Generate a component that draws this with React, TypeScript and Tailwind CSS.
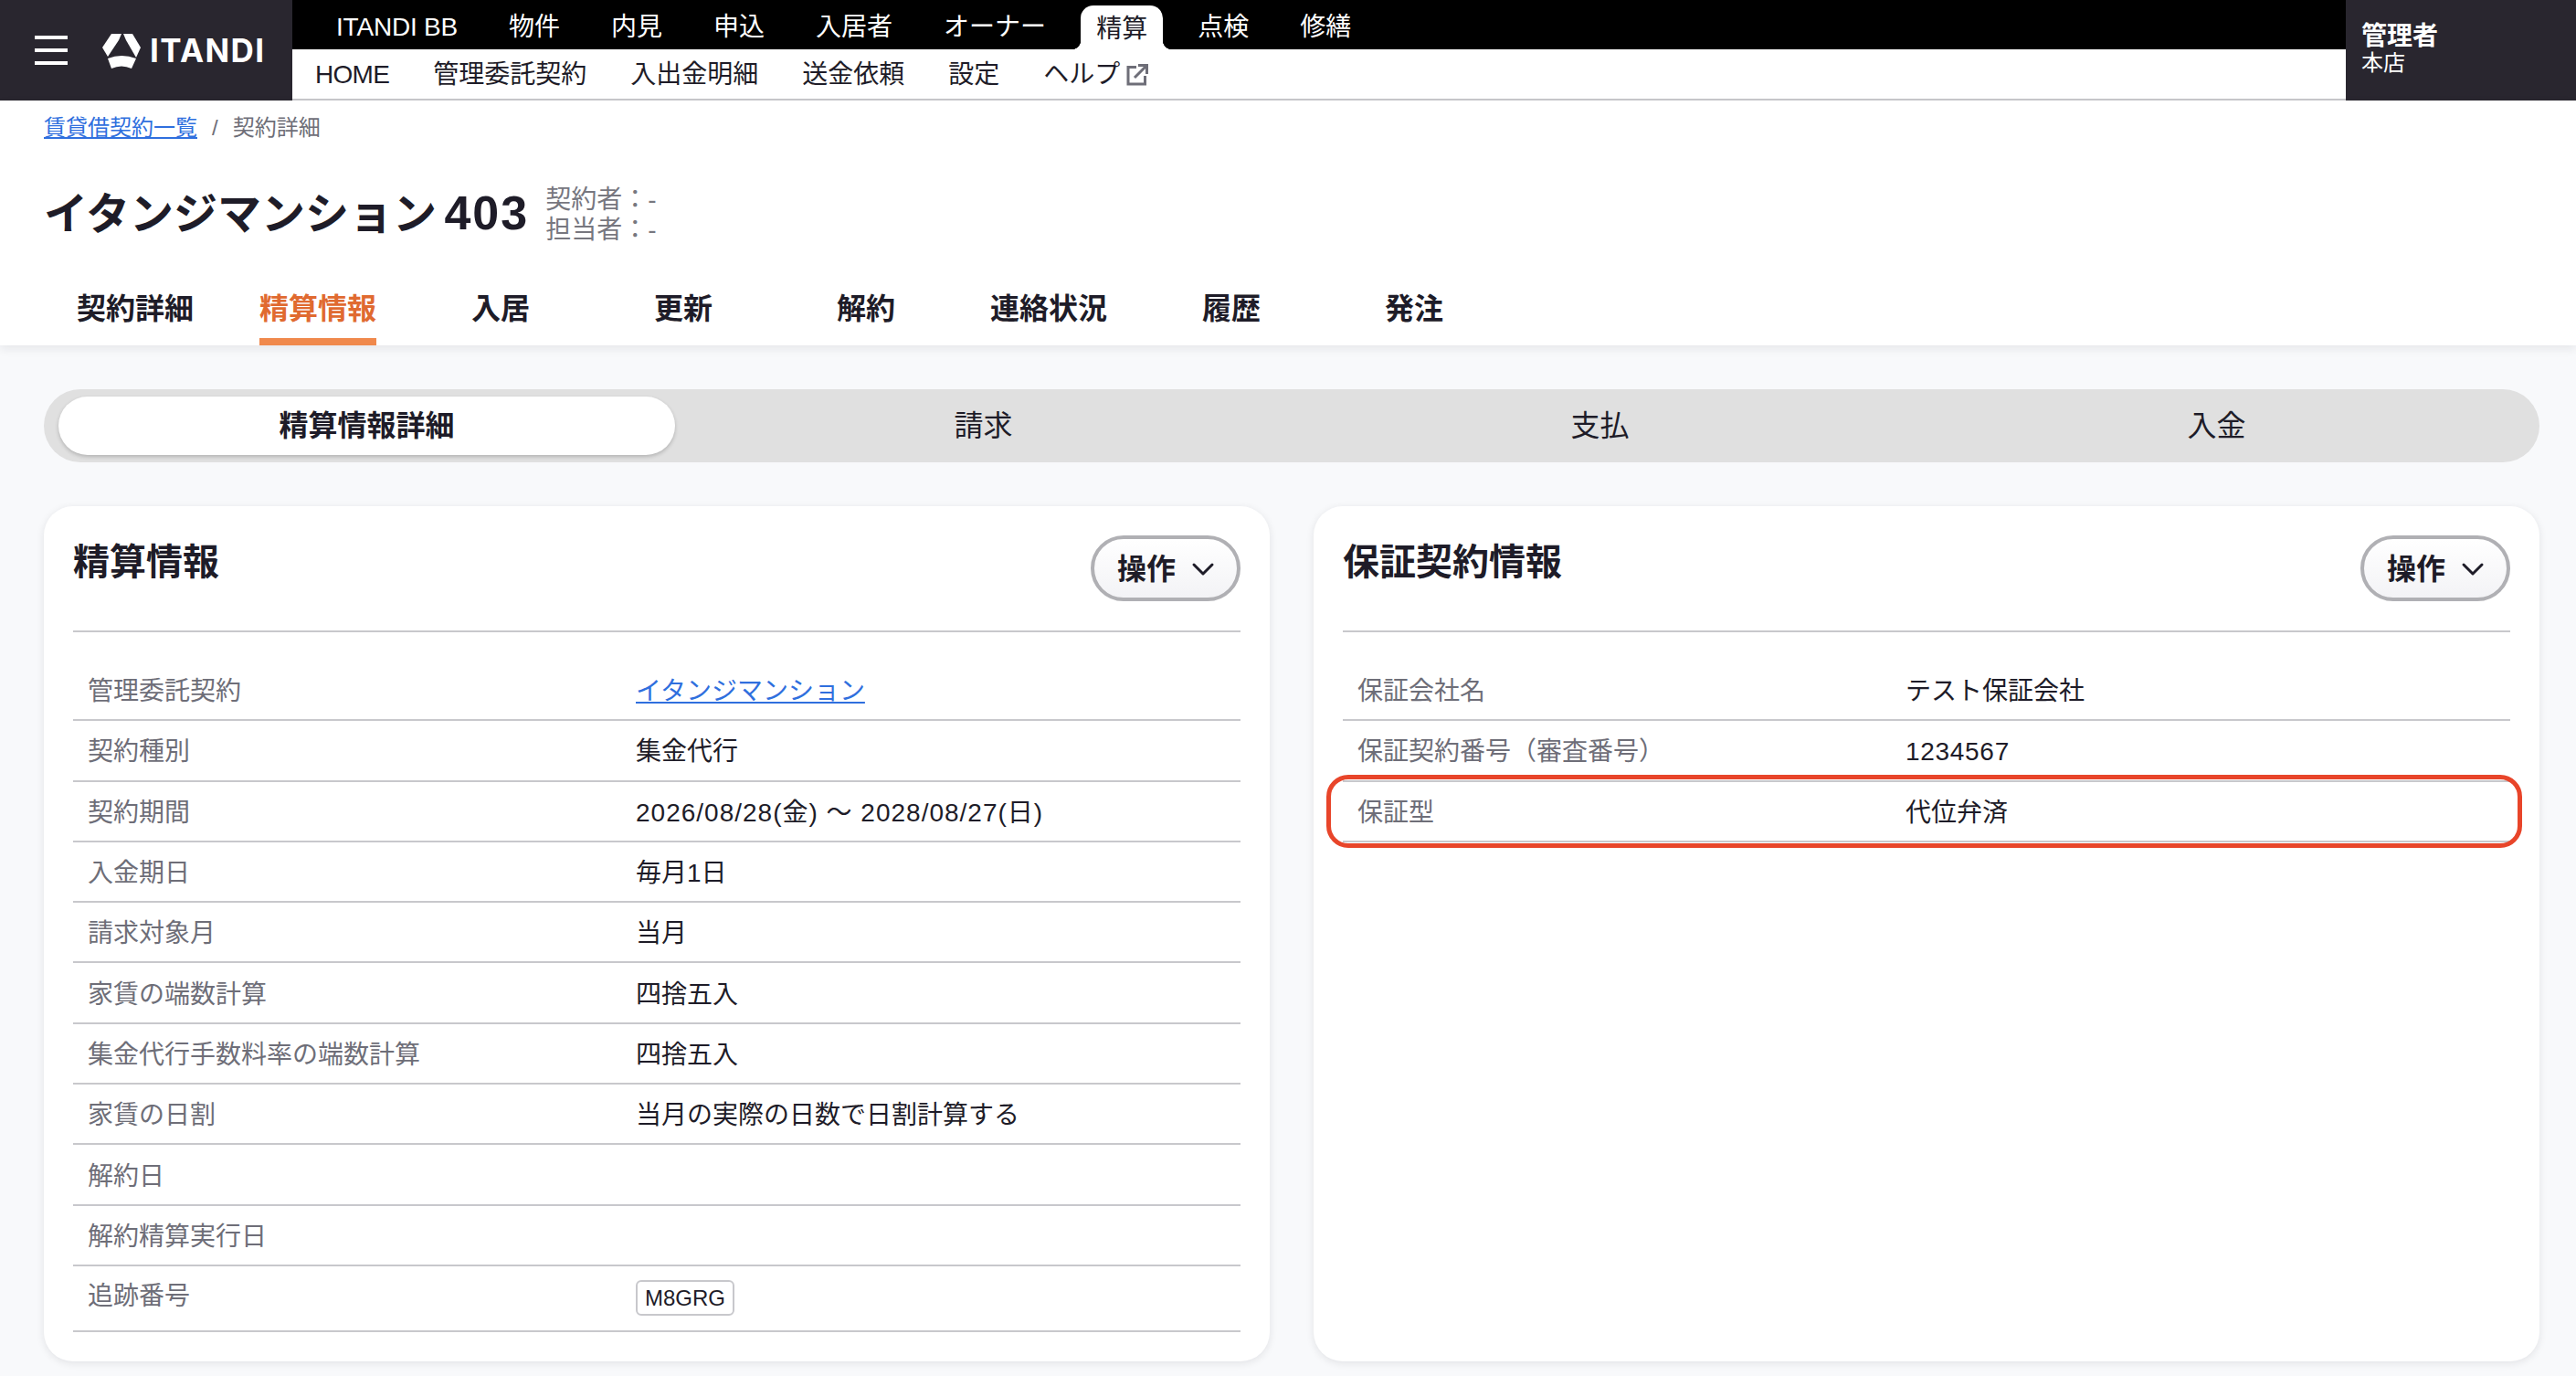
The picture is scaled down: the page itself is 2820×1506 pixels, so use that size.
import React from 'react';
import { ChevronDown } from 'lucide-react';

const topNav = ['ITANDI BB', '物件', '内見', '申込', '入居者', 'オーナー', '精算', '点検', '修繕'];
const subNav = ['HOME', '管理委託契約', '入出金明細', '送金依頼', '設定'];
const pageTabs = ['契約詳細', '精算情報', '入居', '更新', '解約', '連絡状況', '履歴', '発注'];
const segments = ['精算情報詳細', '請求', '支払', '入金'];

const settlementRows = [
  { label: '契約種別', value: '集金代行' },
  { label: '契約期間', value: <span className="tracking-[1px]">2026/08/28(金) 〜 2028/08/27(日)</span> },
  { label: '入金期日', value: '毎月1日' },
  { label: '請求対象月', value: '当月' },
  { label: '家賃の端数計算', value: '四捨五入' },
  { label: '集金代行手数料率の端数計算', value: '四捨五入' },
  { label: '家賃の日割', value: '当月の実際の日数で日割計算する' },
  { label: '解約日', value: '' },
  { label: '解約精算実行日', value: '' },
];

const guaranteeRows = [
  { label: '保証会社名', value: 'テスト保証会社' },
  { label: '保証契約番号（審査番号）', value: <span className="tracking-[0.7px]">1234567</span> },
  { label: '保証型', value: '代位弁済' },
];

function Logo() {
  return (
    <div className="flex items-center gap-[10px]">
      <svg width="42" height="39" viewBox="0 0 42 39" fill="#fff">
        <path d="M10 1H21L18 8L6 26L0 16Z" />
        <path d="M23 1H33L42 16L37 27L26 8Z" />
        <path d="M6 28Q21 22 37 28L32 39Q21 34 10 39Z" />
      </svg>
      <span className="text-[35px] leading-none font-bold tracking-[1.4px] text-white font-['Inter',sans-serif]">ITANDI</span>
    </div>
  );
}

function Header() {
  return (
    <header className="flex h-[110px] bg-white">
      <div className="flex w-[320px] items-center bg-[#29262f] pl-[38px]">
        <div className="mr-[38px] flex w-[36px] flex-col gap-[10px]">
          <span className="h-[4px] bg-white" />
          <span className="h-[4px] bg-white" />
          <span className="h-[4px] bg-white" />
        </div>
        <Logo />
      </div>
      <div className="flex-1 border-b-2 border-[#c8c8cc]">
        <nav className="flex h-[54px] items-end gap-[20px] bg-black pl-[30px]">
          {topNav.map((item) =>
            item === '精算' ? (
              <a key={item} className="relative flex h-[48px] items-center rounded-t-[14px] bg-white px-[17px] pt-[3px] text-[28px] text-[#1e1c28]">
                {item}
                <span className="absolute bottom-0 left-[-10px] h-[10px] w-[10px] bg-[radial-gradient(circle_at_0_0,#000_10px,#fff_10.5px)]" />
                <span className="absolute right-[-10px] bottom-0 h-[10px] w-[10px] bg-[radial-gradient(circle_at_100%_0,#000_10px,#fff_10.5px)]" />
              </a>
            ) : item === 'ITANDI BB' ? (
              <a key={item} className="flex h-[54px] items-center px-[18px] pt-[5px] text-[28px] tracking-[-0.2px] text-white">
                {item}
              </a>
            ) : (
              <a key={item} className="flex h-[54px] items-center px-[18px] pt-[6px] text-[28px] text-white">
                {item}
              </a>
            ),
          )}
        </nav>
        <nav className="flex h-[54px] items-center gap-[48px] pt-[2px] pl-[25px] text-[28px] text-[#1e1c28]">
          {subNav.map((item) =>
            item === 'HOME' ? (
              <a key={item} className="tracking-[-0.7px]">{item}</a>
            ) : (
              <a key={item}>{item}</a>
            ),
          )}
          <a className="flex items-center gap-[7px]">
            ヘルプ
            <svg width="24" height="24" viewBox="0 0 24 24" fill="none" stroke="#6e6e78" strokeWidth="3">
              <path d="M11 3.5H2V22H20.5V13" />
              <path d="M9 15L22 2" />
              <path d="M13 1.5H22.5V11" />
            </svg>
          </a>
        </nav>
      </div>
      <div className="flex w-[252px] flex-col bg-[#29262f] pt-[23px] pl-[17px] text-white">
        <span className="text-[28px] leading-[33px] font-bold">管理者</span>
        <span className="text-[24px] leading-[26px]">本店</span>
      </div>
    </header>
  );
}

function PageHead() {
  return (
    <section className="relative bg-white px-[48px] shadow-[0_4px_10px_rgba(30,28,40,0.08)]">
      <div className="flex h-[56px] items-center pt-[3px] text-[24px] text-[#6e6e78]">
        <a className="text-[#2f6fde] underline underline-offset-2">賃貸借契約一覧</a>
        <span className="mx-[16px]">/</span>
        <span>契約詳細</span>
      </div>
      <div className="flex h-[132px] items-center pt-[4px]">
        <h1 className="text-[48px] leading-[60px] font-bold text-[#1e1c28]">
          イタンジマンション <span className="ml-[-5px] text-[52px] tracking-[2px]">403</span>
        </h1>
        <div className="mt-[2px] ml-[18px] text-[28px] leading-[33px] text-[#77777f]">
          <div>契約者：-</div>
          <div>担当者：-</div>
        </div>
      </div>
      <nav className="flex h-[80px]">
        {pageTabs.map((tab) => (
          <div key={tab} className="flex w-[200px] justify-center">
            {tab === '精算情報' ? (
              <span className="h-[80px] border-b-8 border-[#f0894c] pt-[8px] text-[32px] leading-[64px] font-bold text-[#e06a30]">{tab}</span>
            ) : (
              <span className="h-[80px] pt-[8px] text-[32px] leading-[64px] font-bold text-[#1e1c28]">{tab}</span>
            )}
          </div>
        ))}
      </nav>
    </section>
  );
}

function Row({ label, value }: { label: string; value: React.ReactNode }) {
  return (
    <div className="flex h-[66.3px] items-center border-b-2 border-[#c8c8cc] pt-[4px] pl-[16px] text-[28px]">
      <div className="w-[600px] text-[#6e6e78]">{label}</div>
      <div className="text-[#1e1c28]">{value}</div>
    </div>
  );
}

function Card({ title, children }: { title: string; children: React.ReactNode }) {
  return (
    <div className="relative flex-1 rounded-[32px] bg-white p-[32px] shadow-[0_2px_8px_rgba(30,28,40,0.1)]">
      <div className="flex h-[106px] items-start justify-between border-b-2 border-[#c8c8cc]">
        <h2 className="pt-[2px] text-[40px] leading-[54px] font-bold text-[#1e1c28]">{title}</h2>
        <button className="flex h-[72px] w-[164px] items-center gap-[10px] rounded-full border-4 border-[#b0b0b4] bg-gradient-to-b from-white to-[#f3f3f6] pt-[2px] pl-[25px] text-[32px] font-bold text-[#1e1c28]">
          操作
          <ChevronDown size={40} strokeWidth={1.8} />
        </button>
      </div>
      <div className="mt-[31px]">{children}</div>
    </div>
  );
}

export default function App() {
  return (
    <div className="min-h-screen bg-[#f8f9fb] font-['Liberation_Sans','Noto_Sans_CJK_JP',sans-serif]">
      <Header />
      <PageHead />
      <main className="pt-[48px] pr-[40px] pb-[15px] pl-[48px]">
        <div className="flex h-[80px] w-[2732px] items-center rounded-full bg-[#e0e0e0] px-[16px]">
          {segments.map((seg, i) =>
            i === 0 ? (
              <div key={seg} className="flex h-[64px] flex-1 items-center justify-center rounded-full bg-white text-[32px] font-bold text-[#1e1c28] shadow-[0_2px_4px_rgba(0,0,0,0.2)]">
                {seg}
              </div>
            ) : (
              <div key={seg} className="flex h-[64px] flex-1 items-center justify-center text-[32px] text-[#1e1c28]">
                {seg}
              </div>
            ),
          )}
        </div>
        <div className="mt-[48px] flex w-[2732px] gap-[48px]">
          <Card title="精算情報">
            <Row label="管理委託契約" value={<a className="text-[#2f6fde] underline underline-offset-2">イタンジマンション</a>} />
            {settlementRows.map((row) => (
              <Row key={row.label} label={row.label} value={row.value} />
            ))}
            <div className="flex h-[72px] items-start border-b-2 border-[#c8c8cc] pl-[16px] text-[28px]">
              <div className="w-[600px] pt-[12px] leading-[42px] text-[#6e6e78]">追跡番号</div>
              <span className="mt-[15px] flex h-[39px] w-[108px] items-center justify-center rounded-[6px] border-2 border-[#c8c8cc] pt-[2px] text-[24px] text-[#1e1c28]">M8GRG</span>
            </div>
          </Card>
          <Card title="保証契約情報">
            {guaranteeRows.map((row) => (
              <Row key={row.label} label={row.label} value={row.value} />
            ))}
            {/* highlight drawn over the row */}
            <div className="absolute top-[294px] left-[14px] h-[80px] w-[1309px] rounded-[24px] border-[5px] border-[#e8452a]" />
          </Card>
        </div>
      </main>
    </div>
  );
}
